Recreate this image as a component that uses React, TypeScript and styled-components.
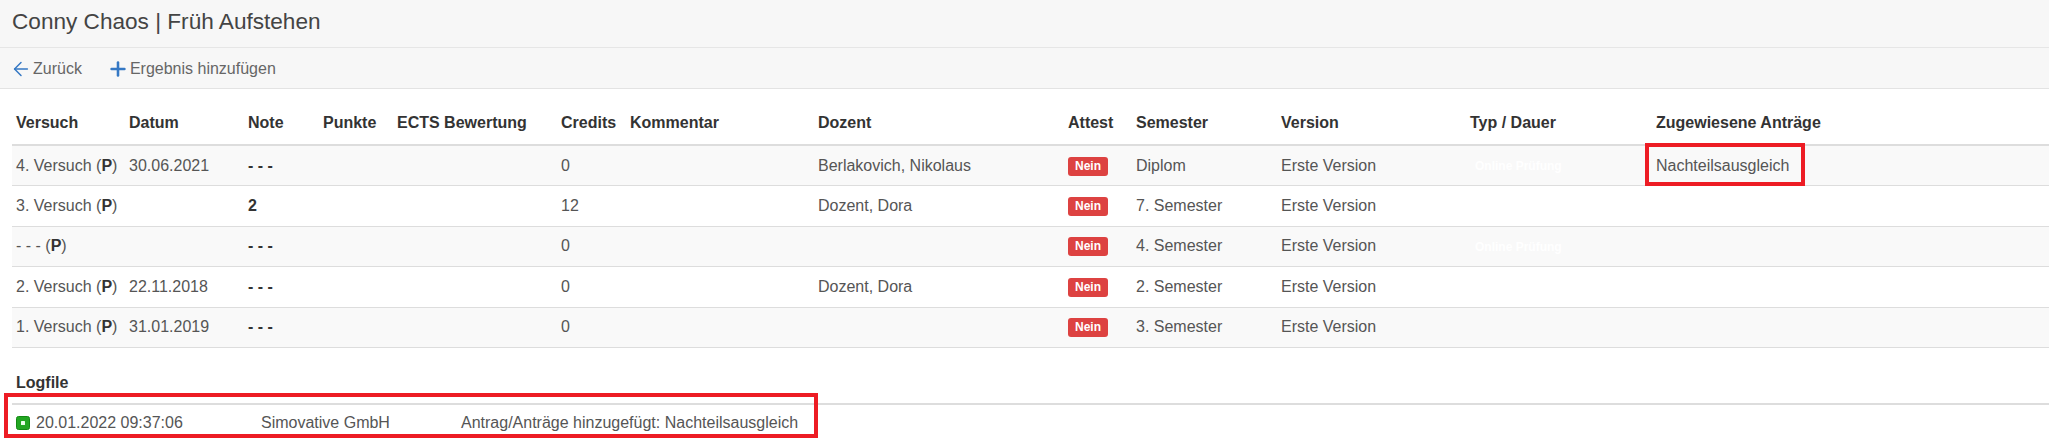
import React from 'react';
import styled, { createGlobalStyle } from 'styled-components';
import { ArrowLeft, Plus } from 'lucide-react';

const GlobalStyle = createGlobalStyle`
  html, body {
    margin: 0;
    padding: 0;
    background: #fff;
    font-family: "Liberation Sans", Arial, sans-serif;
    color: #555;
  }
`;

const TitleBar = styled.div`
  height: 48px;
  padding: 0 12px 3px;
  box-sizing: border-box;
  display: flex;
  align-items: center;
  background: #f7f7f7;
  border-bottom: 1px solid #e6e6e6;

  h1 {
    margin: 0;
    font-size: 22.6px;
    font-weight: 400;
    color: #444;
  }
`;

const Toolbar = styled.div`
  height: 41px;
  padding: 1px 14px 0;
  box-sizing: border-box;
  display: flex;
  align-items: center;
  gap: 29px;
  background: #f7f7f7;
  border-bottom: 1px solid #e3e3e3;
`;

const ToolLink = styled.a`
  display: flex;
  align-items: center;
  gap: 5px;
  font-size: 16px;
  color: #666;
  text-decoration: none;
  cursor: pointer;

  svg {
    color: #3578c4;
    margin: 0 -4px;
  }
`;

const Content = styled.div`
  padding: 12px 0 0 12px;
`;

const Table = styled.table`
  width: 100%;
  table-layout: fixed;
  border-collapse: collapse;
  font-size: 16px;

  th {
    text-align: left;
    font-weight: 700;
    color: #333;
    padding: 12px 4px 11px;
    line-height: 20px;
    border-bottom: 2px solid #ddd;
    white-space: nowrap;
  }

  td {
    height: 40.5px;
    box-sizing: border-box;
    padding: 0 4px;
    line-height: 20px;
    border-bottom: 1px solid #ddd;
    white-space: nowrap;
    vertical-align: middle;
  }

  tbody tr:nth-child(odd) td {
    background: #f9f9f9;
  }
`;

const Strong = styled.b`
  color: #333;
`;

const Badge = styled.span`
  display: inline-block;
  padding: 3px 7px 4px;
  font-size: 12px;
  line-height: 12px;
  font-weight: 700;
  color: #fff;
  background: #dd4241;
  border-radius: 3px;
  vertical-align: middle;
`;

const WhiteLabel = styled.span`
  display: inline-block;
  padding: 0 5px;
  font-size: 12px;
  font-weight: 700;
  color: #fff;
`;

const Marked = styled.span<{ $top: number; $right: number; $bottom: number; $left: number }>`
  position: relative;
  display: inline-block;

  &::after {
    content: '';
    position: absolute;
    top: ${(p) => p.$top}px;
    right: ${(p) => p.$right}px;
    bottom: ${(p) => p.$bottom}px;
    left: ${(p) => p.$left}px;
    border: 4px solid #ed1c24;
    pointer-events: none;
  }
`;

const LogTitle = styled.div`
  margin-top: 25px;
  padding-left: 4px;
  font-size: 16px;
  line-height: 20px;
  font-weight: 700;
  color: #333;
`;

const LogBlock = styled.div`
  position: relative;
  margin-top: 10px;
  border-top: 2px solid #ddd;
`;

const LogRow = styled.div`
  display: grid;
  grid-template-columns: 245px 200px 1fr;
  height: 36px;
  align-items: center;
  font-size: 16px;
  line-height: 20px;
  color: #555;

  > div {
    padding: 0 4px;
    display: flex;
    align-items: center;
    gap: 6px;
  }
`;

const LogMark = styled.div`
  position: absolute;
  top: -12px;
  left: -8px;
  width: 814px;
  height: 45px;
  box-sizing: border-box;
  border: 4px solid #ed1c24;
  pointer-events: none;
`;

const StatusIcon = () => (
  <svg width="14" height="14" viewBox="0 0 14 14">
    <rect x="0.5" y="0.5" width="13" height="13" rx="2" fill="#22a622" stroke="#138a13" />
    <rect x="5" y="5" width="4" height="4" rx="0.5" fill="#eaffea" />
  </svg>
);

const widths = [113, 119, 75, 74, 164, 69, 188, 250, 68, 145, 189, 186];
const headers = [
  'Versuch', 'Datum', 'Note', 'Punkte', 'ECTS Bewertung', 'Credits', 'Kommentar',
  'Dozent', 'Attest', 'Semester', 'Version', 'Typ / Dauer', 'Zugewiesene Anträge',
];

type Row = {
  versuch: string;
  datum: string;
  note: string;
  credits: string;
  dozent: string;
  semester: string;
  online: boolean;
  antrag: boolean;
};

const rows: Row[] = [
  { versuch: '4. Versuch', datum: '30.06.2021', note: '- - -', credits: '0', dozent: 'Berlakovich, Nikolaus', semester: 'Diplom', online: true, antrag: true },
  { versuch: '3. Versuch', datum: '', note: '2', credits: '12', dozent: 'Dozent, Dora', semester: '7. Semester', online: false, antrag: false },
  { versuch: '- - -', datum: '', note: '- - -', credits: '0', dozent: '', semester: '4. Semester', online: true, antrag: false },
  { versuch: '2. Versuch', datum: '22.11.2018', note: '- - -', credits: '0', dozent: 'Dozent, Dora', semester: '2. Semester', online: false, antrag: false },
  { versuch: '1. Versuch', datum: '31.01.2019', note: '- - -', credits: '0', dozent: '', semester: '3. Semester', online: false, antrag: false },
];

export default function App() {
  return (
    <>
      <GlobalStyle />
      <TitleBar>
        <h1>Conny Chaos | Früh Aufstehen</h1>
      </TitleBar>
      <Toolbar>
        <ToolLink><ArrowLeft size={22} strokeWidth={1.6} />Zurück</ToolLink>
        <ToolLink><Plus size={22} strokeWidth={2.8} />Ergebnis hinzufügen</ToolLink>
      </Toolbar>

      <Content>
        <Table>
          <colgroup>
            {widths.map((w, i) => <col key={i} style={{ width: w }} />)}
            <col />
          </colgroup>
          <thead>
            <tr>{headers.map((h) => <th key={h}>{h}</th>)}</tr>
          </thead>
          <tbody>
            {rows.map((r, i) => (
              <tr key={i}>
                <td>{r.versuch} (<Strong>P</Strong>)</td>
                <td>{r.datum}</td>
                <td><Strong>{r.note}</Strong></td>
                <td></td>
                <td></td>
                <td>{r.credits}</td>
                <td></td>
                <td>{r.dozent}</td>
                <td><Badge>Nein</Badge></td>
                <td>{r.semester}</td>
                <td>Erste Version</td>
                <td>{r.online && <WhiteLabel>Online Prüfung</WhiteLabel>}</td>
                <td>
                  {r.antrag && (
                    <Marked $top={-13} $right={-16} $bottom={-10} $left={-11}>Nachteilsausgleich</Marked>
                  )}
                </td>
              </tr>
            ))}
          </tbody>
        </Table>

        <LogTitle>Logfile</LogTitle>
        <LogBlock>
          <LogRow>
            <div><StatusIcon />20.01.2022 09:37:06</div>
            <div>Simovative GmbH</div>
            <div>Antrag/Anträge hinzugefügt: Nachteilsausgleich</div>
          </LogRow>
          <LogMark />
        </LogBlock>
      </Content>
    </>
  );
}
